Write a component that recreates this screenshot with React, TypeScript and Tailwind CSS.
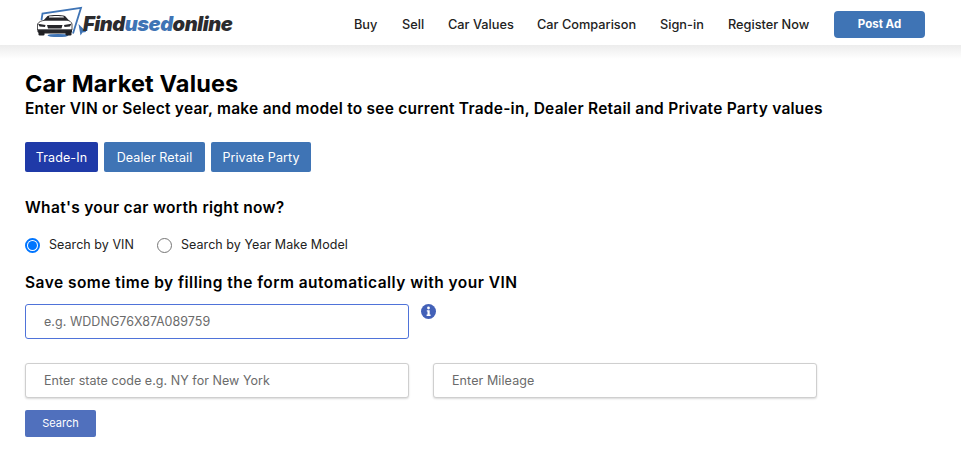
const font = "font-['Inter','Liberation_Sans',sans-serif]";

function Logo() {
  return (
    <div className="flex items-center w-[196px] ml-[36px] mt-[1px]">
      <svg width="50" height="36" viewBox="0 0 50 36" className="shrink-0">
        <path d="M5.5 15 L6.5 8.5 L45 2.8 L37 28.5" fill="none" stroke="#3f74b5" strokeWidth="1.8" />
        <ellipse cx="22" cy="30.5" rx="10.5" ry="1.6" fill="#3f74b5" />
        <path d="M46 19 L54 27 L50 27.5 L48 30.5 Z" fill="#3f74b5" transform="translate(-3.5 0)" />
        <path d="M7 16 L11.5 11 C16 9.6 25 9.6 29 11 L33.5 16 Z" fill="#26262a" />
        <path d="M13 11.6 C17 10.8 24 10.8 27.5 11.6 L28 12.4 L13 12.6 Z" fill="#fff" />
        <path d="M1.5 19 C3 16.5 6 15.5 9 15.3 H31 C33.5 15.5 35.5 17 36 19 V25 H1.5 Z" fill="#fff" stroke="#26262a" strokeWidth="0.8" />
        <path d="M2 18.8 L9.5 20 L9 22 L3.5 21.5 Z M35.5 18.8 L28 20 L28.5 22 L34 21.5 Z" fill="#26262a" />
        <path d="M11 20 H26.5 L25.5 23.5 H12 Z" fill="#26262a" />
        <path d="M1.5 24.5 H36 V27 L33 28.5 H4.5 L1.5 27 Z" fill="#26262a" />
        <rect x="2.5" y="26" width="6" height="4.5" rx="1.2" fill="#1f1f22" />
        <rect x="29.5" y="26" width="6" height="4.5" rx="1.2" fill="#1f1f22" />
      </svg>
      <span className="ml-[-3px] mt-[2px] text-[20px] leading-none font-black italic tracking-[-0.45px] text-[#2b2b2e]">
        Find<span className="text-[#3f74b5]">used</span>online
      </span>
    </div>
  );
}

const nav = [
  ["Buy", "w-[24px]"],
  ["Sell", "w-[22px]"],
  ["Car Values", "w-[65px]"],
  ["Car Comparison", "w-[99px]"],
  ["Sign-in", "w-[44px]"],
  ["Register Now", "w-[83px]"],
];

function Field({ placeholder, focused, wide }: { placeholder: string; focused?: boolean; wide?: boolean }) {
  return (
    <div
      className={
        "w-[384px] h-[35px] rounded-[3px] border bg-white pl-[18px] pt-[1px] flex items-center text-[12.5px] text-[#6b6b6b] " +
        (wide ? "tracking-[0.1px] " : "tracking-[0.05px] ") +
        (focused ? "border-[#4f73d9]" : "border-[#cfcfcf] shadow-[0_1px_2px_rgba(0,0,0,0.15)]")
      }
    >
      {placeholder}
    </div>
  );
}

export default function App() {
  return (
    <div className={`w-[961px] h-[454px] overflow-hidden bg-white text-black ${font}`}>
      <header className="h-[45px] flex items-center bg-white">
        <Logo />
        <nav className="flex items-center gap-[24px] ml-[122px] mt-[4px] text-[12.75px] font-medium text-[#222] whitespace-nowrap">
          {nav.map(([label, w]) => (
            <span key={label} className={w}>{label}</span>
          ))}
        </nav>
        <button className="ml-[23px] w-[91px] h-[27px] rounded-[4px] bg-[#3f74b5] text-white text-[11.5px] font-bold mt-[4px]">
          Post Ad
        </button>
      </header>
      <main className="px-[25px] pt-[26px] bg-gradient-to-b from-[#ececec] to-white to-[14px]">
        <h1 className="text-[23.5px] leading-[26px] font-bold tracking-[0.15px]">Car Market Values</h1>
        <p className="text-[15.5px] leading-[24px] font-semibold tracking-[0.24px] whitespace-nowrap">
          Enter VIN or Select year, make and model to see current Trade-in, Dealer Retail and Private Party values
        </p>
        <div className="flex gap-[6px] mt-[21px]">
          <button className="w-[73px] h-[30px] pt-[2px] rounded-[2px] bg-[#1f3aa8] text-white text-[12.5px] tracking-[0.1px]">Trade-In</button>
          <button className="w-[101px] h-[30px] pt-[2px] rounded-[2px] bg-[#3f74b5] text-white text-[12.5px] tracking-[0.1px]">Dealer Retail</button>
          <button className="w-[100px] h-[30px] pt-[2px] rounded-[2px] bg-[#3f74b5] text-white text-[12.5px] tracking-[0.1px]">Private Party</button>
        </div>
        <h2 className="mt-[26px] text-[15.5px] leading-[20px] font-semibold tracking-[0.31px]">What's your car worth right now?</h2>
        <div className="flex items-center mt-[17px] h-[20px] text-[12.5px] text-[#222] tracking-[0.05px]">
          <span className="w-[15px] h-[15px] rounded-full border-2 border-[#0075ff] flex items-center justify-center">
            <span className="w-[9px] h-[9px] rounded-full bg-[#0075ff]" />
          </span>
          <span className="ml-[9px]">Search by VIN</span>
          <span className="ml-[23px] w-[15px] h-[15px] rounded-full border border-[#767676]" />
          <span className="ml-[9px]">Search by Year Make Model</span>
        </div>
        <h3 className="mt-[18px] text-[15.5px] leading-[20px] font-semibold tracking-[0.47px]">Save some time by filling the form automatically with your VIN</h3>
        <div className="flex mt-[11px]">
          <Field placeholder="e.g. WDDNG76X87A089759" focused />
          <svg width="15" height="15" viewBox="0 0 15 15" className="ml-[12px]">
            <circle cx="7.5" cy="7.5" r="7.5" fill="#4361b8" />
            <circle cx="7.5" cy="4" r="1.4" fill="#fff" />
            <path d="M5.8 6.2 H8.7 V10.6 H9.6 V12 H5.6 V10.6 H6.5 V7.6 H5.8 Z" fill="#fff" />
          </svg>
        </div>
        <div className="flex gap-[24px] mt-[24px]">
          <Field placeholder="Enter state code e.g. NY for New York" />
          <Field placeholder="Enter Mileage" wide />
        </div>
        <button className="block mt-[12px] w-[71px] h-[27px] rounded-[2px] bg-[#5070bd] text-white text-[11px]">Search</button>
      </main>
    </div>
  );
}
